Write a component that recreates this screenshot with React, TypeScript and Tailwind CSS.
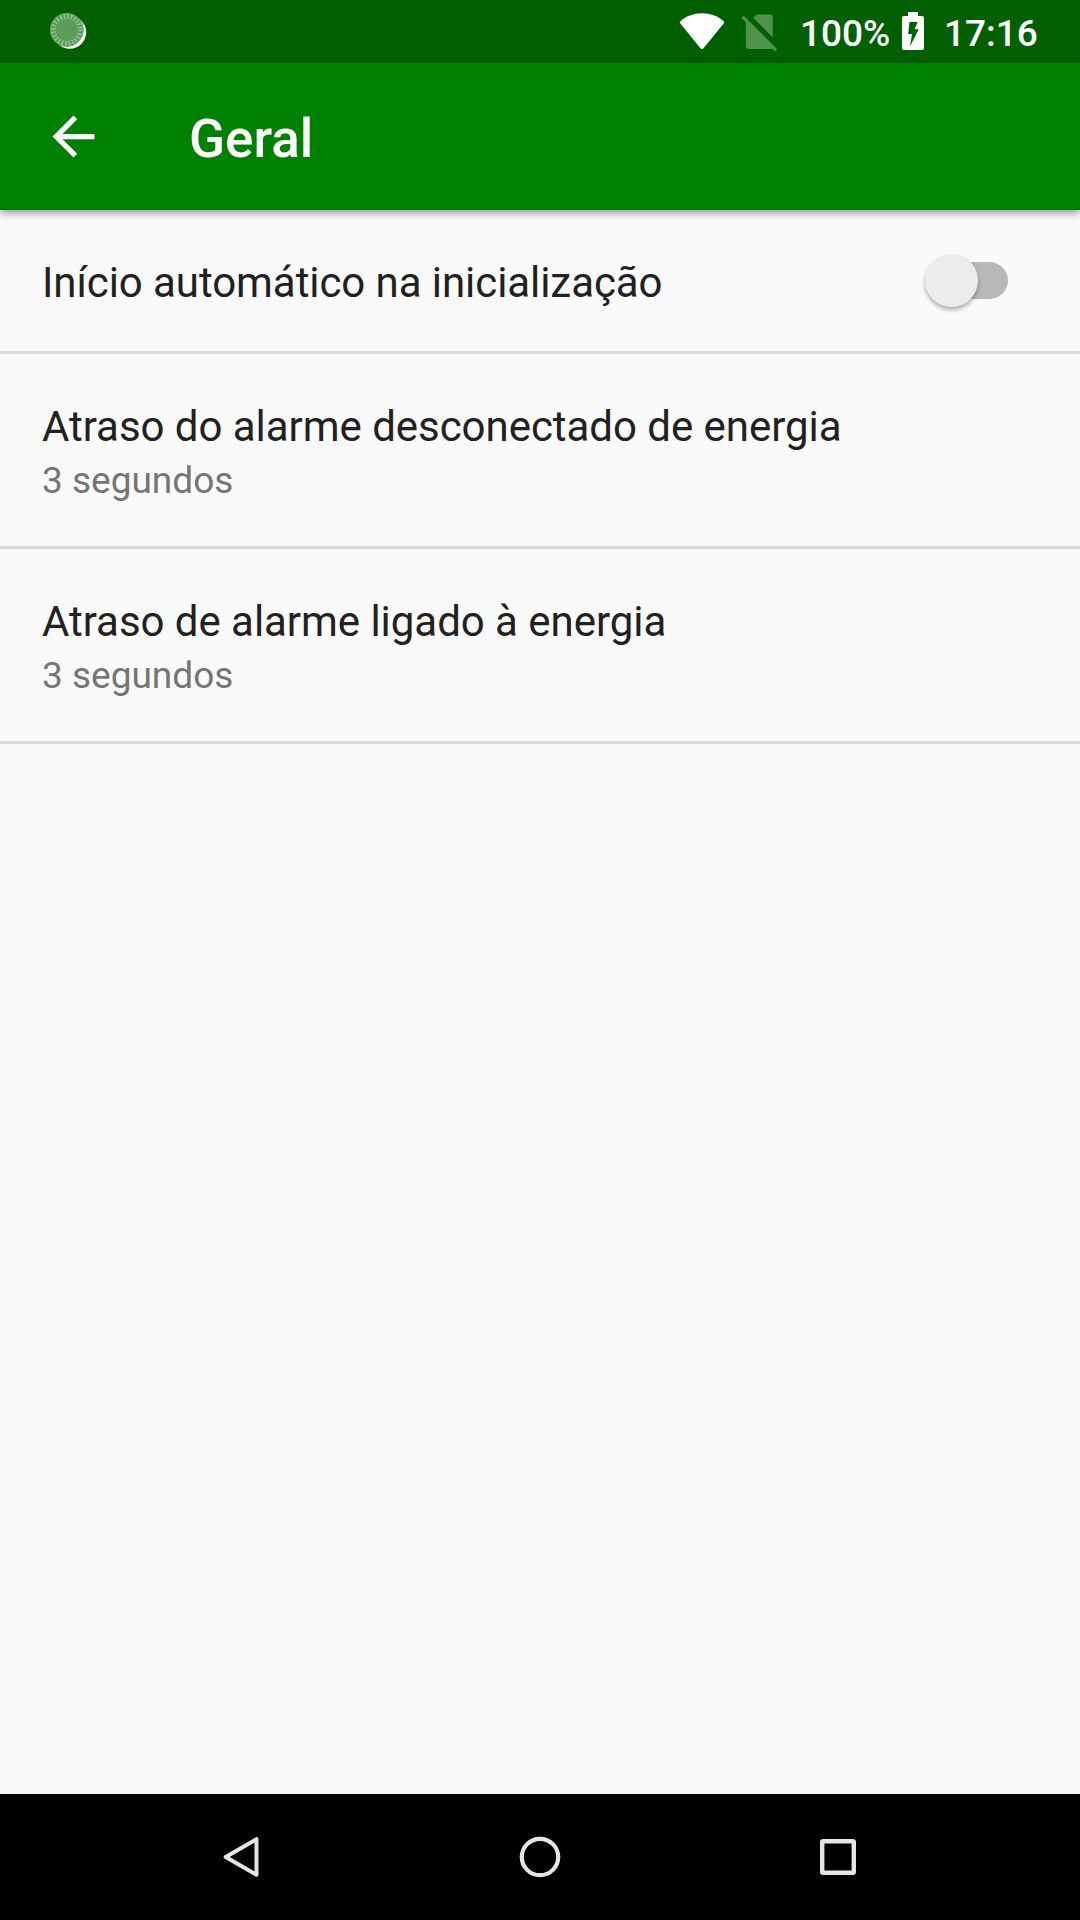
function NotificationIcon() {
  return (
    <svg className="size-[42px]" viewBox="0 0 42 42">
      <circle cx="23.700" cy="22.300" r="16.500" fill="#fdfffd" />
      <circle cx="20.800" cy="19.900" r="16.800" fill="#5b9c5a" />
      <circle cx="20.800" cy="19.900" r="13.500" fill="none" stroke="#93c293" strokeWidth="5" strokeDasharray="1.500 2.034" />
      <circle cx="20.800" cy="19.900" r="16.400" fill="none" stroke="#6ba66b" strokeWidth="1" />
    </svg>
  );
}

function WifiIcon() {
  return (
    <svg className="h-[38px] w-[46px]" viewBox="0 0 46 38">
      <path d="M1.2 9.4C6.6 4.2 14.5 1.2 23 1.2s16.400 3 21.800 8.200q.9.900.1 1.900L24.500 36.200q-1.500 1.800-3 0L1.100 11.300q-.8-1 .1-1.900z" fill="#fff" />
    </svg>
  );
}

function NoSimIcon() {
  return (
    <svg className="h-[38px] w-9" viewBox="0 0 36 38" fill="#4e924e">
      <path d="M12.200 3.800L14.500 1.500Q15.500.500 17 .500H28.500Q31.800.500 31.800 3.800V23.400z" />
      <path d="M3.500 2.600L35.200 34.300a1.550 1.550 0 0 1-2.200 2.200L31 34.500q-.7.500-1.700.500H8q-3.200 0-3.200-3.300V8.300L1.300 4.800a1.550 1.550 0 0 1 2.200-2.200z" />
    </svg>
  );
}

function BatteryIcon() {
  return (
    <svg className="h-[38px] w-[22px]" viewBox="0 0 22 38">
      <path
        fillRule="evenodd"
        fill="#fff"
        d="M6 0h10v4h4q2 0 2 2v30q0 2-2 2H2q-2 0-2-2V6q0-2 2-2h4zM7.500 10L6.200 22H10L8 34.500 16.700 17.300H12.600L15.600 10z"
      />
    </svg>
  );
}

function StatusBar() {
  return (
    <div className="flex h-[63px] items-start bg-[#006000] text-white">
      <div className="ml-[46px] mt-[10px]">
        <NotificationIcon />
      </div>
      <div className="ml-auto mt-3 flex items-start pr-[42px]">
        <WifiIcon />
        <div className="ml-4 mt-0.5">
          <NoSimIcon />
        </div>
        <span className="ml-[23px] w-[90px] text-[37px] font-medium leading-[43px]">100%</span>
        <div className="ml-[12px]">
          <BatteryIcon />
        </div>
        <span className="ml-[20px] w-[94px] text-[37px] font-medium leading-[43px]">17:16</span>
      </div>
    </div>
  );
}

function Toolbar() {
  return (
    <header className="relative flex h-[147px] items-center bg-[#008000] pl-[42px] text-white shadow-[0_3px_8px_rgba(0,0,0,0.4)]">
      <button aria-label="Voltar">
        <svg className="size-[63px]" viewBox="0 0 24 24" fill="currentColor">
          <path d="M20 11H7.830l5.590-5.590L12 4l-8 8 8 8 1.410-1.410L7.830 13H20v-2z" />
        </svg>
      </button>
      <h1 className="ml-[84px] mt-[5px] text-[53px] font-medium leading-[62px]">Geral</h1>
    </header>
  );
}

function Toggle() {
  return (
    <div className="relative mr-[72px] mt-[52px] h-[37px] w-[76px] rounded-full bg-[#b8b8b8]">
      <div className="absolute -left-[7px] -top-[8px] size-[53px] rounded-full bg-[#ececec] shadow-[0_3px_4px_rgba(0,0,0,0.3)]" />
    </div>
  );
}

function DelayPreference({ title, summary }: { title: string; summary: string }) {
  return (
    <div className="h-[195px] border-b-[3px] border-[#dadada] pl-[42px] pt-[48px]">
      <div className="text-[42px] leading-[49px] tracking-[-0.04px] text-[#212121]">{title}</div>
      <div className="mt-[8px] text-[37px] leading-[43px] text-[#757575]">{summary}</div>
    </div>
  );
}

function NavigationBar() {
  return (
    <nav className="flex h-[126px] items-center justify-between bg-black px-[210px]">
      <svg className="size-16" viewBox="0 0 64 64">
        <path d="M15.700 32L46.500 14.200V49.800z" fill="none" stroke="#e6e6e6" strokeWidth="4" strokeLinejoin="round" />
      </svg>
      <svg className="size-16" viewBox="0 0 64 64">
        <circle cx="32" cy="32" r="18.200" fill="none" stroke="#e6e6e6" strokeWidth="4.200" />
      </svg>
      <svg className="size-16" viewBox="0 0 64 64">
        <rect x="16.200" y="16.200" width="31.600" height="31.600" rx="1" fill="none" stroke="#e6e6e6" strokeWidth="4.400" />
      </svg>
    </nav>
  );
}

export default function App() {
  return (
    <div className="flex h-[1920px] w-[1080px] flex-col overflow-hidden bg-[#fafafa] font-['Roboto',sans-serif]">
      <StatusBar />
      <Toolbar />
      <main className="flex-1">
        <div className="flex h-[144px] items-start justify-between border-b-[3px] border-[#dadada] pl-[42px]">
          <div className="mt-[48px] text-[42px] leading-[49px] tracking-[-0.07px] text-[#212121]">
            Início automático na inicialização
          </div>
          <Toggle />
        </div>
        <DelayPreference title="Atraso do alarme desconectado de energia" summary="3 segundos" />
        <DelayPreference title="Atraso de alarme ligado à energia" summary="3 segundos" />
      </main>
      <NavigationBar />
    </div>
  );
}
